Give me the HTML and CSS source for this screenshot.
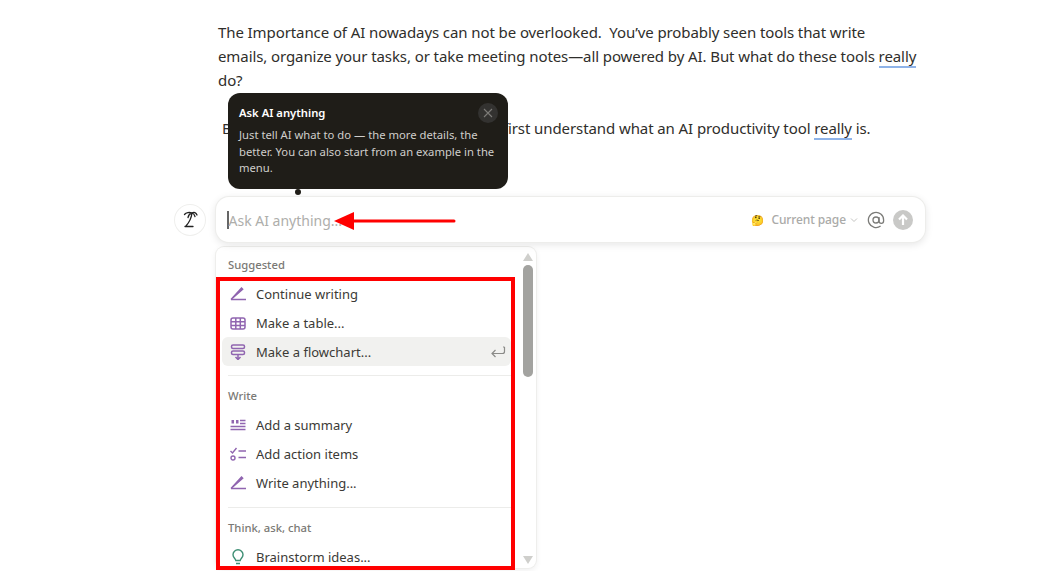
FILE: index.html
```html
<!DOCTYPE html>
<html lang="en">
<head>
<meta charset="utf-8">
<title>Ask AI anything</title>
<link rel="stylesheet" href="styles.css">
</head>
<body>
<main class="page">
  <article class="article">
    <p>The Importance of AI nowadays can not be overlooked.&nbsp; You’ve probably seen tools that write emails, organize your tasks, or take meeting notes—all powered by AI. But what do these tools <span class="spell">really</span> do?</p>
    <p class="second">But before we go any further there, let’s first understand what an AI productivity tool <span class="spell">really</span> is.</p>
  </article>

  <section class="composer">
    <div class="ai-face">
      <svg width="20" height="20" viewBox="0 0 20 20" fill="none" stroke="#222" stroke-width="1.300" stroke-linecap="round"><path d="M4.500 4.500C6 2.500 9.500 2 12 3c2-1 4-.5 5 2M12 3c-2 .5-3.500 2-4 4.500M12 3c1.500.5 2.500 1.500 3 3.500M12 3c-.5 4-2.500 9-6 13M5 16.500h8"/></svg>
    </div>
    <div class="prompt">
      <span class="caret"></span>
      <span class="placeholder">Ask AI anything...</span>
      <span class="scope">
        <span class="emoji">🤔</span>
        <span class="scope-label">Current page</span>
        <svg class="chev" width="8" height="8" viewBox="0 0 8 8" fill="none" stroke="#c4c4c2" stroke-width="1"><path d="M1 2.500l3 3 3-3"/></svg>
      </span>
      <svg class="at" width="18" height="18" viewBox="0 0 18 18" fill="none" stroke="#7b7b78" stroke-width="1.300"><circle cx="9" cy="9" r="3"/><path d="M12 6v4a2.300 2.300 0 0 0 4.600 0V9a7.600 7.600 0 1 0-3 6"/></svg>
      <span class="send">
        <svg width="12" height="12" viewBox="0 0 12 12" fill="none" stroke="#fff" stroke-width="2.200"><path d="M6 11V2M2 5.500L6 1.500l4 4"/></svg>
      </span>
    </div>
  </section>

  <section class="menu">
    <div class="menu-list">
      <h3 class="group-title">Suggested</h3>
      <div class="item">
        <svg class="ico" viewBox="0 0 16 16" fill="none" stroke="#9065b0" stroke-width="1.400"><path d="M1 13.500h15"/><path d="M1 13.500L11.500 2l1.200 1.200z" fill="#9065b0"/></svg>
        <span>Continue writing</span>
      </div>
      <div class="item">
        <svg class="ico" viewBox="0 0 16 16" fill="none" stroke="#9065b0" stroke-width="1.500"><rect x="1" y="3" width="14" height="11" rx="2"/><path d="M1 6.800h14M1 10.400h14M5.800 3v11M10.300 3v11"/></svg>
        <span>Make a table...</span>
      </div>
      <div class="item active">
        <svg class="ico" viewBox="0 0 16 16" fill="none" stroke="#9065b0" stroke-width="1.500"><rect x="1.500" y="1" width="13" height="3.500" rx="1.500"/><rect x="1.500" y="7" width="13" height="3.500" rx="1.500"/><path d="M8 10.500v5M5.500 13L8 15.500 10.500 13"/></svg>
        <span>Make a flowchart...</span>
        <svg class="enter" width="16" height="14" viewBox="0 0 16 14" fill="none" stroke="#8b8b88" stroke-width="1.200"><path d="M14.500 2h-1.500M14.500 2v4.500a2 2 0 0 1-2 2H2M5.500 5L2 8.500 5.500 12"/></svg>
      </div>
      <hr class="rule">
      <h3 class="group-title">Write</h3>
      <div class="item">
        <svg class="ico" viewBox="0 0 16 16" fill="none" stroke="#9065b0" stroke-width="1.300"><path d="M0.500 9.500h15M0.500 12.500h15M10 3.500h5.500M10 6.500h5.500"/><path d="M1.500 3h2.500v3.500h-2.500zM6 3h2.500v3.500H6z" fill="#9065b0" stroke="none"/></svg>
        <span>Add a summary</span>
      </div>
      <div class="item">
        <svg class="ico" viewBox="0 0 16 16" fill="none" stroke="#9065b0" stroke-width="1.400"><path d="M0.500 5l2 2L6.500 2M8.500 5H16M8.500 11.500H16"/><circle cx="3" cy="12" r="2"/></svg>
        <span>Add action items</span>
      </div>
      <div class="item">
        <svg class="ico" viewBox="0 0 16 16" fill="none" stroke="#9065b0" stroke-width="1.400"><path d="M1 13.500h15"/><path d="M1 13.500L11.500 2l1.200 1.200z" fill="#9065b0"/></svg>
        <span>Write anything...</span>
      </div>
      <hr class="rule">
      <h3 class="group-title">Think, ask, chat</h3>
      <div class="item">
        <svg class="ico" viewBox="0 0 16 16" fill="none" stroke="#3f8f75" stroke-width="1.400"><path d="M5.800 11.500C5.500 9.500 3 8.500 3 5.700a5 5 0 0 1 10 0c0 2.800-2.500 3.800-2.800 5.800zM6 14.500h4"/></svg>
        <span>Brainstorm ideas...</span>
      </div>
    </div>
    <div class="scrollbar">
      <span class="arrow up"></span>
      <span class="thumb"></span>
      <span class="arrow down"></span>
    </div>
  </section>

  <aside class="tip">
    <div class="tip-head">
      <strong>Ask AI anything</strong>
      <span class="tip-close">
        <svg width="10" height="10" viewBox="0 0 10 10" stroke="#7d7c78" stroke-width="1.100"><path d="M1 1l8 8M9 1l-8 8"/></svg>
      </span>
    </div>
    <p>Just tell AI what to do — the more details, the better. You can also start from an example in the menu.</p>
  </aside>
  <span class="tip-dot"></span>

  <div class="red-box"></div>
  <svg class="red-arrow" width="124" height="20" viewBox="0 0 124 20"><path d="M120 10H18" stroke="#f00" stroke-width="3" stroke-linecap="round"/><path d="M0 10L20 1v18z" fill="#f00"/></svg>
</main>
</body>
</html>
```
FILE: styles.css
```css
* { box-sizing: border-box; }
html, body { margin: 0; height: 100%; background: #fff; overflow: hidden; }
body { font-family: "Noto Sans", "Open Sans", sans-serif; color: #37352f; }
.page { position: relative; width: 1043px; height: 571px; overflow: hidden; }

.article { width: 700px; margin-left: 218px; padding-top: 20px; font-size: 15px; letter-spacing: -.09px; line-height: 24px; color: #2f2e2b; }
.article p { margin: 0; }
.article .second { margin-top: 24px; padding-left: 4px; }
.spell { border-bottom: 2px solid #8fb3e8; }

.composer { display: flex; align-items: center; gap: 11px; margin: 57px 0 0 175px; }
.ai-face { width: 30px; height: 30px; border-radius: 50%; background: #fff; box-shadow: 0 0 0 1px #efefed; display: flex; align-items: center; justify-content: center; }
.prompt { width: 709px; height: 45px; border-radius: 13px; background: #fff; box-shadow: 0 0 0 1px #ededeb, 0 2px 8px rgba(15,15,15,.12); display: flex; align-items: center; padding: 0 12px 0 11px; font-size: 14px; }
.caret { width: 1.500px; height: 18px; background: #666; }
.placeholder { flex: 1; color: #aeaeab; padding-top: 1px; }
.scope { display: flex; align-items: center; gap: 4px; margin-right: 9px; font-size: 12px; letter-spacing: -.1px; font-weight: 500; color: #aaaaa8; }
.emoji { font-size: 10.500px; margin-right: 2px; width: 14px; }
.at { margin-right: 8px; }
.send { width: 20px; height: 20px; border-radius: 50%; background: #c9c9c7; display: flex; align-items: center; justify-content: center; }

.menu { display: flex; width: 320px; height: 321px; margin: 5px 0 0 216px; border-radius: 8px; background: #fff; box-shadow: 0 0 0 1px #eeeeec, 0 2px 6px rgba(15,15,15,.08); overflow: hidden; }
.menu-list { flex: 1; padding: 0 6px; min-width: 0; }
.group-title { margin: 0; height: 34px; padding: 12px 6px 0; font-size: 11.25px; line-height: 16px; font-weight: 500; color: #7a7975; }
.group-title:first-child { height: 32px; padding-top: 10px; }
.item { display: flex; align-items: center; gap: 10px; height: 29px; padding: 0 8px; font-size: 13px; border-radius: 6px; color: #3b3a36; margin-right: 3px; }
.item.active { background: #f1f1ef; }
.ico { width: 16px; height: 16px; flex: none; }
.enter { margin-left: auto; margin-right: -3px; }
.rule { border: 0; border-top: 1px solid #ececea; margin: 9px 3px 0 6px; }
.rule ~ .rule { margin-top: 10px; }
.scrollbar { width: 16px; flex: none; display: flex; flex-direction: column; align-items: center; padding: 6px 0 4px; margin-right: 0; }
.thumb { width: 10px; height: 112px; border-radius: 5px; background: #a3a3a0; margin-top: 4px; }
.arrow { width: 0; height: 0; border-left: 5px solid transparent; border-right: 5px solid transparent; }
.arrow.up { border-bottom: 8px solid #cfcfcc; }
.arrow.down { border-top: 8px solid #cfcfcc; margin-top: auto; }

.tip { position: absolute; left: 228px; top: 93px; width: 280px; height: 96px; padding: 12px 11px 0; border-radius: 12px; background: #1f1d18; color: #cfcecb; font-size: 11.25px; line-height: 16.500px; }
.tip-head { display: flex; align-items: center; justify-content: space-between; height: 16px; margin-right: -1px; color: #fff; }
.tip-head strong { font-weight: 600; }
.tip-close { width: 20px; height: 20px; border-radius: 50%; background: #333230; display: flex; align-items: center; justify-content: center; }
.tip p { margin: 6px 0 0; }
.tip-dot { position: absolute; left: 295px; top: 189px; width: 6px; height: 6px; border-radius: 50%; background: #1f1d18; }

.red-box { position: absolute; left: 216px; top: 277px; width: 299px; height: 293px; border: 4px solid #f00; }
.red-arrow { position: absolute; left: 334px; top: 211px; }
```
